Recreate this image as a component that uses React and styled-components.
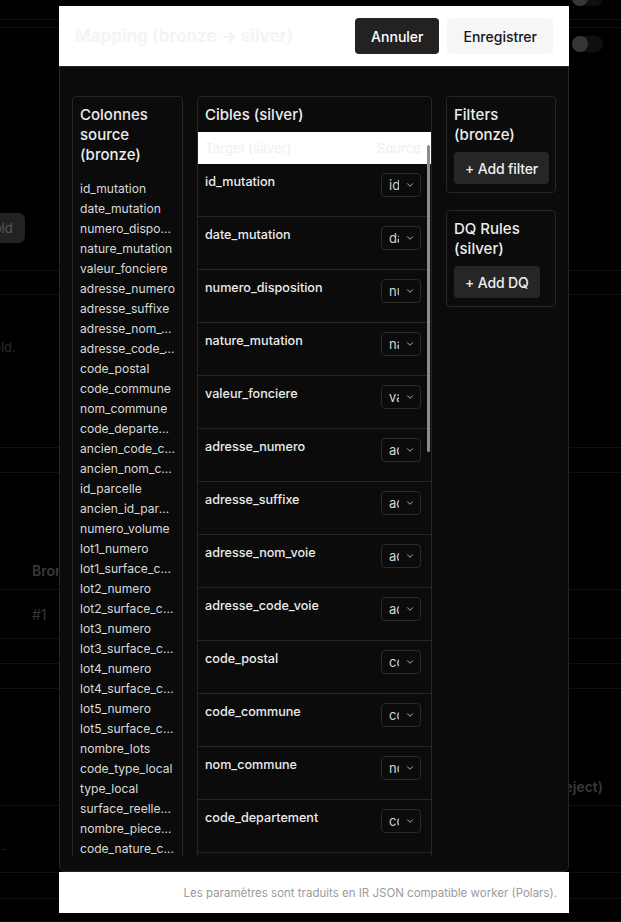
import React from 'react';
import styled, { createGlobalStyle } from 'styled-components';
import { ChevronDown } from 'lucide-react';

const GlobalStyle = createGlobalStyle`
  html, body {
    margin: 0;
    padding: 0;
    background: #000;
    font-family: Inter, "Noto Sans", "Liberation Sans", sans-serif;
    overflow: hidden;
  }
  * { box-sizing: border-box; }
`;

/* ---------- page behind the modal ---------- */

const Page = styled.div`
  width: 621px;
  height: 922px;
  background: #000;
  overflow: hidden;
  color: #9a9a9a;
`;

const Band = styled.div`
  height: ${(p) => p.$h}px;
  border-bottom: 1px solid ${(p) => (p.$line ? '#2a2a2a' : 'transparent')};
  display: flex;
  justify-content: space-between;
  align-items: flex-start;
  padding: 0 18px 0 32px;
`;

const Toggle = styled.div`
  width: 31px;
  height: 16px;
  border-radius: 8px;
  background: #262626;
  margin-top: ${(p) => p.$top || 0}px;
  display: flex;
  align-items: center;

  &::before {
    content: '';
    width: 16px;
    height: 16px;
    border-radius: 50%;
    background: #888;
  }
`;

const GhostButton = styled.div`
  margin: ${(p) => p.$top}px 0 0 -60px;
  height: 30px;
  padding: 0 12px;
  border-radius: 6px;
  background: #555;
  color: #dcdcdc;
  font-size: 13px;
  display: flex;
  align-items: center;
`;

const PageText = styled.div`
  margin: ${(p) => p.$top}px 0 0 ${(p) => p.$left || 0}px;
  font-size: ${(p) => p.$size || 13}px;
  font-weight: ${(p) => p.$weight || 400};
  color: ${(p) => p.$color || '#8a8a8a'};
  white-space: nowrap;
`;

/* ---------- modal ---------- */

const Overlay = styled.div`
  position: fixed;
  inset: 0;
  background: rgba(0, 0, 0, 0.6);
  padding: 6px 0 0 59px;
`;

const Modal = styled.div`
  width: 510px;
  height: 907px;
  display: flex;
  flex-direction: column;
`;

const Header = styled.div`
  height: 60px;
  flex: none;
  background: #fff;
  display: flex;
  align-items: center;
  justify-content: space-between;
  padding: 0 16px;
`;

const Title = styled.h2`
  margin: 0;
  font-size: 17px;
  font-weight: 700;
  color: #f4f4f4;
`;

const Actions = styled.div`
  display: flex;
  gap: 8px;
`;

const HeaderButton = styled.button`
  height: 36px;
  padding: 0 16px;
  border: none;
  border-radius: 4px;
  font-family: inherit;
  font-size: 14px;
  font-weight: 500;
  background: ${(p) => (p.$primary ? '#222' : '#f6f6f6')};
  color: ${(p) => (p.$primary ? '#fff' : '#151515')};
`;

const Body = styled.div`
  flex: 1;
  min-height: 0;
  background: #0b0b0b;
  border: 1px solid #262626;
  border-radius: 0 0 6px 6px;
  padding: 0 12px 15px;
  display: flex;
  flex-direction: column;
`;

const Clip = styled.div`
  flex: 1;
  min-height: 0;
  overflow: hidden;
  padding-top: 29px;
  display: grid;
  grid-template-columns: 111px 235px 110px;
  gap: 14px;
  align-items: start;
`;

const Card = styled.div`
  border: 1px solid #262626;
  border-radius: 4px;
  background: #0b0b0b;
  padding: ${(p) => (p.$flush ? '8px 0 0' : '8px 7px')};
`;

const CardTitle = styled.div`
  font-size: 15px;
  font-weight: 500;
  line-height: 20px;
  color: #ededed;
  padding: ${(p) => (p.$flush ? '0 7px' : '0')};
`;

const SourceList = styled.ul`
  list-style: none;
  margin: 14px 0 0;
  padding: 0;
`;

const SourceItem = styled.li`
  font-size: 12.1px;
  line-height: 20px;
  color: #dadada;
  white-space: nowrap;
  overflow: hidden;
  text-overflow: ellipsis;
`;

const TableWrap = styled.div`
  position: relative;
  margin-top: 7px;
`;

const TableScroll = styled.div`
  max-height: 725px;
  overflow: hidden;
`;

const ScrollThumb = styled.div`
  position: absolute;
  top: 13px;
  right: 1px;
  width: 3px;
  height: 307px;
  border-radius: 2px;
  background: #8c8c8c;
`;

const TableHead = styled.div`
  height: 32px;
  background: #fff;
  display: flex;
  align-items: center;
  justify-content: space-between;
  padding: 0 10px 0 7px;
  font-size: 13px;
  font-weight: 500;
  color: #f1f1f1;
`;

const Row = styled.div`
  height: 53px;
  border-bottom: 1px solid #262626;
  padding: 9px 10px 0 7px;
  display: flex;
  justify-content: space-between;
  align-items: flex-start;
`;

const TargetName = styled.div`
  font-size: 12.6px;
  font-weight: 500;
  line-height: 18px;
  color: #ececec;
`;

const Select = styled.div`
  width: 40px;
  height: 24px;
  border: 1px solid #2a2a2a;
  border-radius: 4px;
  display: flex;
  align-items: center;
  gap: 6px;
  padding: 0 5px 0 7px;
  color: #d6d6d6;
  font-size: 13px;
`;

const SelectValue = styled.span`
  width: 10px;
  overflow: hidden;
  white-space: nowrap;
`;

const SideStack = styled.div`
  display: flex;
  flex-direction: column;
  gap: 17px;
`;

const AddButton = styled.button`
  margin-top: 7px;
  height: 32px;
  padding: 0 11px;
  border: none;
  border-radius: 4px;
  background: #262626;
  color: #efefef;
  font-family: inherit;
  font-size: 14px;
  font-weight: 500;
  white-space: nowrap;
  letter-spacing: -0.01em;
`;

const Footer = styled.div`
  height: 41px;
  flex: none;
  background: #fff;
  display: flex;
  align-items: center;
  justify-content: flex-end;
  padding: 0 12px;
  font-size: 11.5px;
  color: #9b9b9b;
`;

const columns = [
  'id_mutation', 'date_mutation', 'numero_disposition', 'nature_mutation',
  'valeur_fonciere', 'adresse_numero', 'adresse_suffixe', 'adresse_nom_voie',
  'adresse_code_voie', 'code_postal', 'code_commune', 'nom_commune',
  'code_departement', 'ancien_code_commune', 'ancien_nom_commune', 'id_parcelle',
  'ancien_id_parcelle', 'numero_volume', 'lot1_numero', 'lot1_surface_carrez',
  'lot2_numero', 'lot2_surface_carrez', 'lot3_numero', 'lot3_surface_carrez',
  'lot4_numero', 'lot4_surface_carrez', 'lot5_numero', 'lot5_surface_carrez',
  'nombre_lots', 'code_type_local', 'type_local', 'surface_reelle_bati',
  'nombre_pieces_principales', 'code_nature_culture', 'nature_culture',
  'code_nature_culture_speciale', 'nature_culture_speciale', 'surface_terrain',
  'longitude', 'latitude',
];

const BackgroundPage = () => (
  <Page>
    <Band $h={20} $line>
      <span />
      <Toggle $top={-10} />
    </Band>
    <Band $h={8} $line />
    <Band $h={243} $line>
      <GhostButton $top={185}>Gold</GhostButton>
      <Toggle $top={8} />
    </Band>
    <Band $h={24} $line />
    <Band $h={153} $line>
      <PageText $top={44} $left={-70} $color="#6a6a6a">the gold.</PageText>
    </Band>
    <Band $h={25} $line />
    <Band $h={117} $line>
      <PageText $top={89} $size={14} $weight={600}>Bronze</PageText>
    </Band>
    <Band $h={49} $line>
      <PageText $top={16} $size={14}>#1</PageText>
    </Band>
    <Band $h={25} $line />
    <Band $h={25} $line />
    <Band $h={117} $line>
      <span />
      <PageText $top={89} $size={14} $weight={600}>(reject)</PageText>
    </Band>
    <Band $h={67} $line>
      <PageText $top={34} $left={-34} $size={10}>…</PageText>
    </Band>
    <Band $h={26} $line />
    <Band $h={23} $line />
  </Page>
);

export default function App() {
  return (
    <>
      <GlobalStyle />
      <BackgroundPage />
      <Overlay>
        <Modal>
          <Header>
            <Title>Mapping (bronze → silver)</Title>
            <Actions>
              <HeaderButton $primary>Annuler</HeaderButton>
              <HeaderButton>Enregistrer</HeaderButton>
            </Actions>
          </Header>
          <Body>
            <Clip>
              <Card>
                <CardTitle>Colonnes source (bronze)</CardTitle>
                <SourceList>
                  {columns.map((c) => (
                    <SourceItem key={c}>{c}</SourceItem>
                  ))}
                </SourceList>
              </Card>
              <Card $flush>
                <CardTitle $flush>Cibles (silver)</CardTitle>
                <TableWrap>
                  <TableScroll>
                    <TableHead>
                      <span>Target (silver)</span>
                      <span>Source</span>
                    </TableHead>
                    {columns.slice(0, 31).map((c) => (
                      <Row key={c}>
                        <TargetName>{c}</TargetName>
                        <Select>
                          <SelectValue>{c}</SelectValue>
                          <ChevronDown size={10} strokeWidth={2} color="#cfcfcf" />
                        </Select>
                      </Row>
                    ))}
                  </TableScroll>
                  <ScrollThumb />
                </TableWrap>
              </Card>
              <SideStack>
                <Card>
                  <CardTitle>Filters (bronze)</CardTitle>
                  <AddButton>+ Add filter</AddButton>
                </Card>
                <Card>
                  <CardTitle>DQ Rules (silver)</CardTitle>
                  <AddButton>+ Add DQ</AddButton>
                </Card>
              </SideStack>
            </Clip>
          </Body>
          <Footer>Les paramètres sont traduits en IR JSON compatible worker (Polars).</Footer>
        </Modal>
      </Overlay>
    </>
  );
}
